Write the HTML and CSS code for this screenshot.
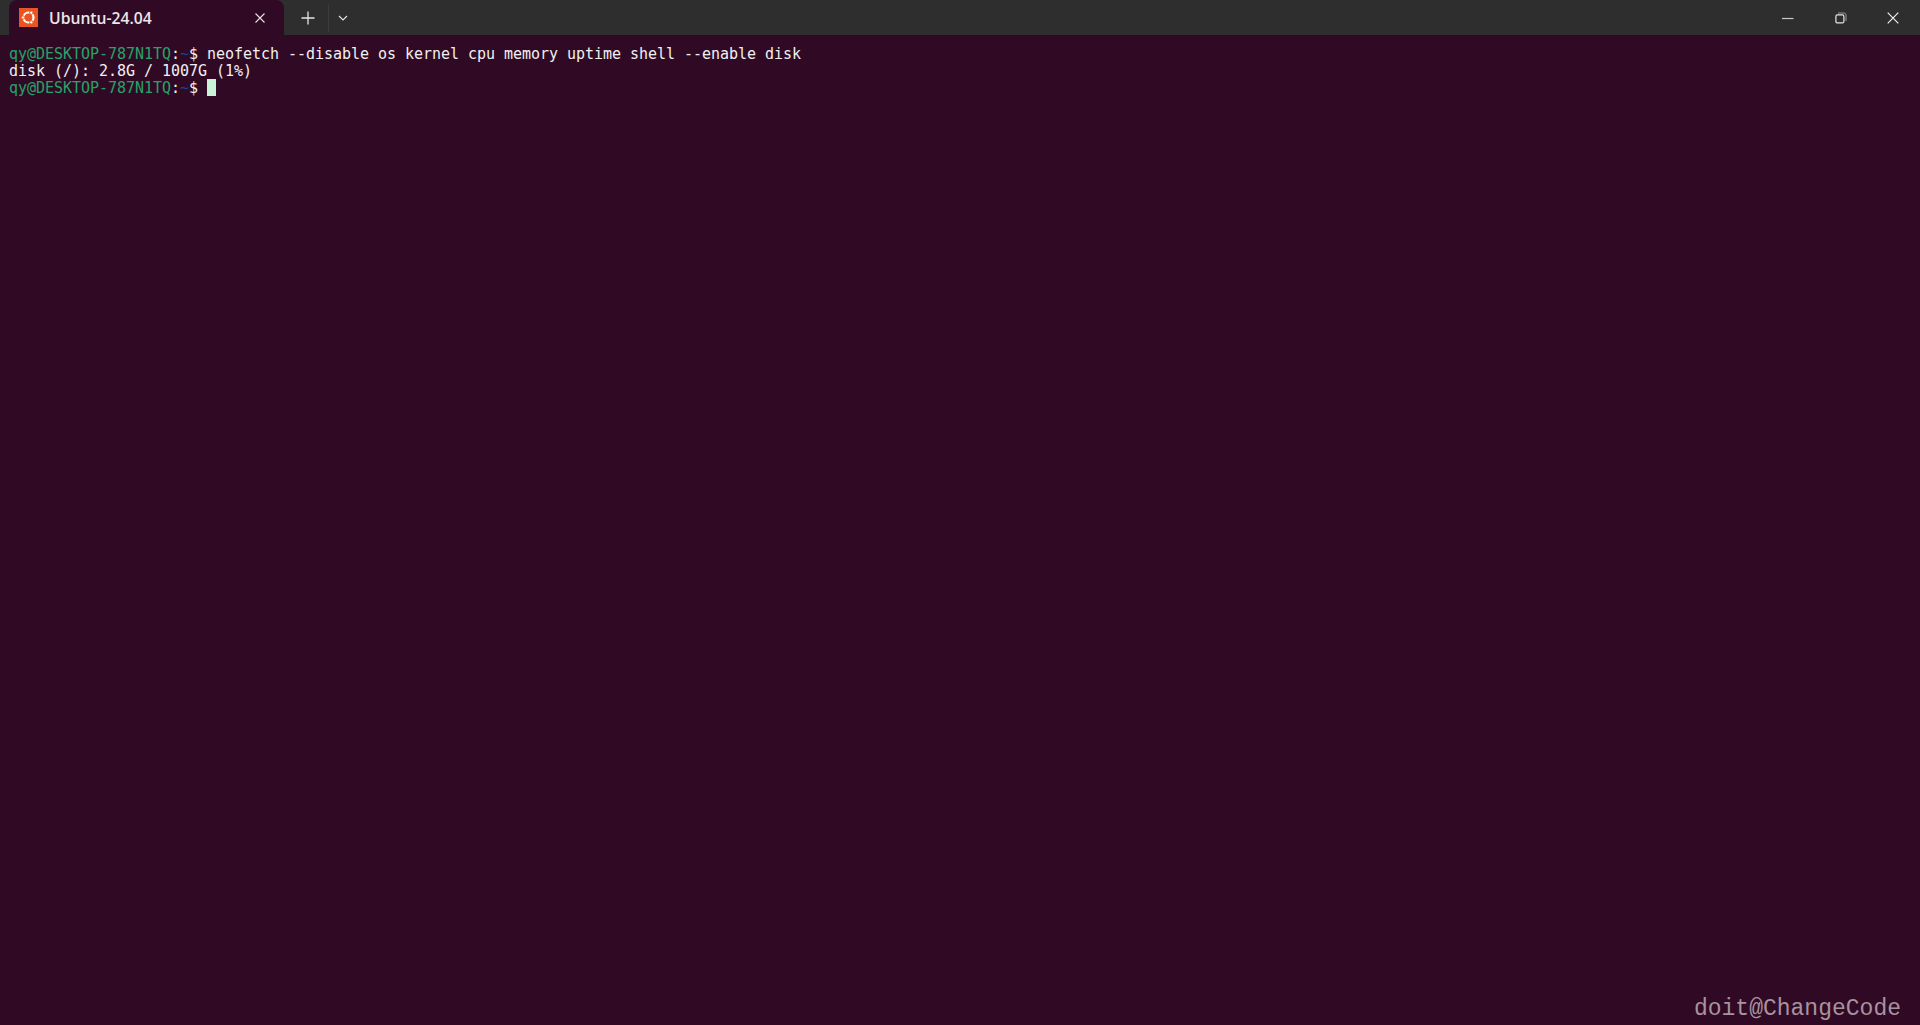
FILE: index.html
```html
<!DOCTYPE html>
<html lang="en">
<head>
<meta charset="utf-8">
<title>Ubuntu-24.04</title>
<link rel="stylesheet" href="styles.css">
</head>
<body>
<div class="window">
  <header class="titlebar">
    <div class="tab">
      <svg class="tab-logo" width="19" height="19" viewBox="0 0 19 19">
        <rect width="19" height="19" fill="#e95420"/>
        <circle cx="9.5" cy="9.5" r="5" fill="none" stroke="#fff" stroke-width="2.2"/>
        <circle cx="4" cy="9.5" r="1.7" fill="#fff" stroke="#e95420" stroke-width="1"/>
        <circle cx="12.3" cy="4.7" r="1.7" fill="#fff" stroke="#e95420" stroke-width="1"/>
        <circle cx="12.3" cy="14.3" r="1.7" fill="#fff" stroke="#e95420" stroke-width="1"/>
      </svg>
      <span class="tab-title">Ubuntu-24.04</span>
      <svg class="tab-close" width="12" height="12" viewBox="0 0 12 12"><path d="M1.5 1.5l9 9M10.5 1.5l-9 9" stroke="#e8e2e6" stroke-width="1.1" fill="none"/></svg>
    </div>
    <div class="tab-actions">
      <svg class="new-tab" width="14" height="14" viewBox="0 0 14 14"><path d="M7 0.5v13M0.5 7h13" stroke="#e6e6e6" stroke-width="1.3" fill="none"/></svg>
      <span class="divider"></span>
      <svg class="tab-menu" width="10" height="6" viewBox="0 0 10 6"><path d="M1 1l4 4 4-4" stroke="#e0e0e0" stroke-width="1.2" fill="none"/></svg>
    </div>
    <div class="window-controls">
      <svg width="12" height="12" viewBox="0 0 12 12"><path d="M0 6.5h11.5" stroke="#c8c8c8" stroke-width="1.2" fill="none"/></svg>
      <svg width="12" height="12" viewBox="0 0 12 12"><rect x="0.9" y="2.9" width="8" height="8" rx="1.5" fill="none" stroke="#e6e6e6" stroke-width="1.2"/><path d="M3 1h6a2 2 0 0 1 2 2v6" fill="none" stroke="#9a9a9a" stroke-width="1"/></svg>
      <svg width="12" height="12" viewBox="0 0 12 12"><path d="M0.7 0.7l10.6 10.6M11.3 0.7l-10.6 10.6" stroke="#f0f0f0" stroke-width="1.2" fill="none"/></svg>
    </div>
  </header>
  <main class="terminal">
    <div class="line"><span class="host">qy@DESKTOP-787N1TQ</span>:<span class="path">~</span>$ neofetch --disable os kernel cpu memory uptime shell --enable disk</div>
    <div class="line">disk (/): 2.8G / 1007G (1%)</div>
    <div class="line"><span class="host">qy@DESKTOP-787N1TQ</span>:<span class="path">~</span>$ <span class="cursor"></span></div>
  </main>
  <footer class="watermark">doit@ChangeCode</footer>
</div>
</body>
</html>
```
FILE: styles.css
```css
* { box-sizing: border-box; }
html, body { margin: 0; height: 100%; overflow: hidden; }
.window {
  position: relative;
  height: 1025px;
  display: flex;
  flex-direction: column;
  background: #300a24;
}
.titlebar {
  height: 35px;
  flex: none;
  display: flex;
  align-items: flex-start;
  background: #2e2e2e;
  padding-left: 9px;
}
.tab {
  width: 275px;
  height: 35px;
  background: #300a24;
  border-radius: 8px 8px 0 0;
  display: flex;
  align-items: center;
  padding: 0 0 0 10px;
}
.tab-logo { flex: none; }
.tab-title {
  margin-left: 11px;
  font: 600 15.7px/18px "Open Sans", "Noto Sans", sans-serif;
  color: #ece6ea;
  flex: 1;
}
.tab-close { flex: none; margin-right: 18px; }
.tab-actions {
  height: 35px;
  display: flex;
  align-items: center;
  padding-left: 17px;
}
.divider {
  width: 1px;
  height: 28px;
  background: #3c3c3c;
  margin: 0 9px 0 13px;
}
.window-controls {
  margin-left: auto;
  height: 35px;
  display: flex;
  align-items: center;
  gap: 40.5px;
  padding-right: 21px;
}
.terminal {
  flex: 1;
  padding: 11px 9px 0;
  font: 15px/17px "DejaVu Sans Mono", monospace;
  letter-spacing: -0.03px;
  color: #f2f0f1;
}
.line { height: 17px; white-space: pre; }
.host { color: #26a269; }
.path { color: #12488b; }
.cursor {
  display: inline-block;
  width: 9px;
  height: 17px;
  margin-top: -1px;
  background: #c9f2d8;
  vertical-align: top;
}
.watermark {
  position: absolute;
  right: 19px;
  bottom: 2px;
  font: 23px/28px "Liberation Mono", monospace;
  color: #a8929f;
}
```
